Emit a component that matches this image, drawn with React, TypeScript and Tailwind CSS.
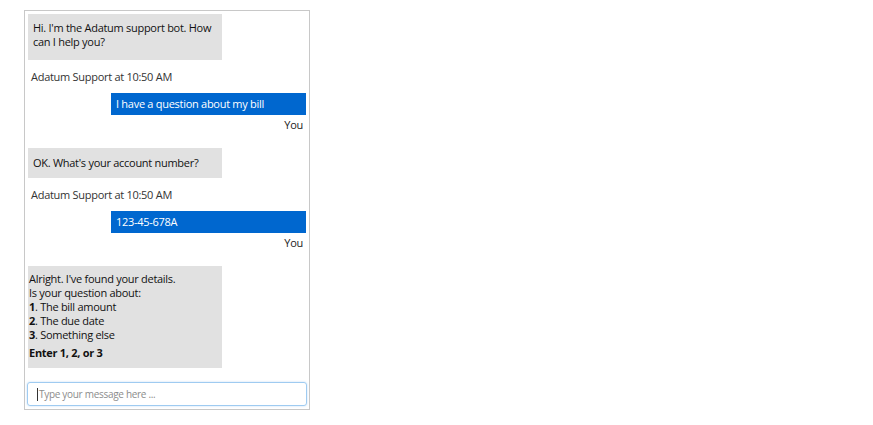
export default function App() {
  return (
    <div className="h-[425px] w-[873px] bg-white pl-[24px] pt-[10px] font-['Open_Sans',sans-serif] text-[11px] tracking-[-0.28px]">
      <div className="flex h-[400px] w-[286px] flex-col border border-[#c8c8c8]">
        <div className="flex flex-1 flex-col px-[3px] pt-[3px]">
          {/* bot greeting */}
          <div className="h-[46px] w-[194px] bg-[#e1e1e1] px-[5px] pt-[7px] leading-[14px] text-[#111]">
            Hi. I'm the Adatum support bot. How can I help you?
          </div>
          <div className="mt-[9px] h-[16px] pl-[3px] leading-[16px] text-[#333]">Adatum Support at 10:50 AM</div>

          <div className="ml-auto mt-[8px] flex h-[22px] w-[195px] items-center bg-[#0067cf] px-[5px] text-white">
            I have a question about my bill
          </div>
          <div className="mt-[2px] h-[16px] pr-[3px] text-right leading-[16px] text-[#222]">You</div>

          <div className="mt-[15px] flex h-[30px] w-[194px] items-center bg-[#e1e1e1] px-[5px] text-[#111]">
            OK. What's your account number?
          </div>
          <div className="mt-[9px] h-[16px] pl-[3px] leading-[16px] text-[#333]">Adatum Support at 10:50 AM</div>

          <div className="ml-auto mt-[8px] flex h-[22px] w-[195px] items-center bg-[#0067cf] px-[5px] text-white">
            123-45-678A
          </div>
          <div className="mt-[2px] h-[16px] pr-[3px] text-right leading-[16px] text-[#222]">You</div>

          {/* options */}
          <div className="mt-[15px] h-[102px] w-[194px] bg-[#e1e1e1] px-[1px] pt-[6px] leading-[14px] text-[#111]">
            <div>Alright. I've found your details.</div>
            <div>Is your question about:</div>
            <div><b>1</b>. The bill amount</div>
            <div><b>2</b>. The due date</div>
            <div><b>3</b>. Something else</div>
            <div className="mt-[4px] font-bold">Enter 1, 2, or 3</div>
          </div>
        </div>

        <div className="px-[2px] pb-[3px]">
          <div className="flex h-[24px] items-center rounded-[3px] border border-[#9fcbf1] px-[9px] shadow-[0_0_2px_rgba(120,180,235,0.5)]">
            <span className="mr-[1px] h-[13px] w-px bg-[#333]" />
            <span className="text-[10px] tracking-[-0.3px] text-[#8c8c8c]">Type your message here ...</span>
          </div>
        </div>
      </div>
    </div>
  )
}
